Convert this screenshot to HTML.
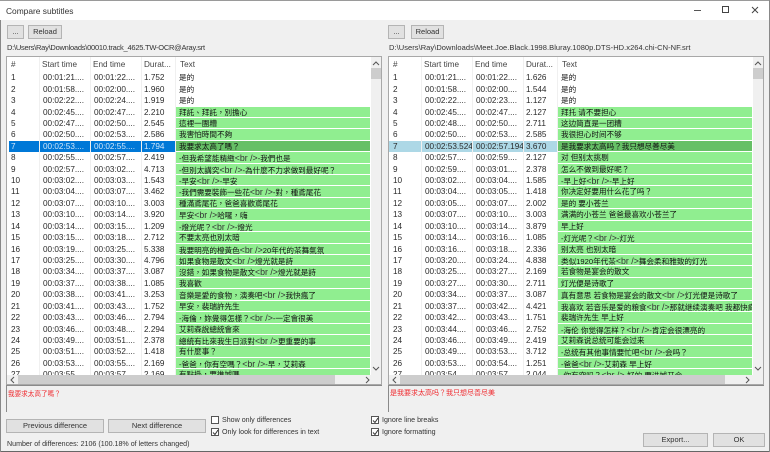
<!DOCTYPE html>
<html><head><meta charset="utf-8"><style>
html,body{margin:0;padding:0}
html{background:#f0f0f0}
body{width:770px;height:452px;overflow:hidden;background:#f0f0f0;position:relative;font:8.2px "Liberation Sans","Noto Sans CJK TC",sans-serif;color:#222;filter:blur(.3px)}
div,span{position:absolute;white-space:nowrap;box-sizing:border-box}
.btn{background:#e1e1e1;border:1px solid #b4b4b4;text-align:center;color:#333;font-size:7.5px}
.t{left:0;top:0;height:329px;background:#fff;border:1px solid #a8a8a8;overflow:hidden}
.h{top:0;left:0;right:0;height:16px;background:#fff}
.h span{top:3px;color:#444;font-size:8.2px}
.sep{top:0;height:318px;width:1px;background:#f0f0f0}
.r{left:0;width:364px;height:11.42px;line-height:12px;color:#2a2a2a}
.r span:nth-child(1){left:4px}
.r span:nth-child(2){left:36px}
.r span:nth-child(3){left:87px}
.r span:nth-child(4){left:137px}
.r span:nth-child(5){left:169px;width:194px;height:10.4px;background:#90ee90;padding-left:3px;font-size:7.6px;color:#111;overflow:hidden}
.r span.w{background:#fff}
.r i{font-style:normal;font-size:8.8px;color:#333}
.s7 span:nth-child(5){background:#66c066!important}
.sb{background:#f0f0f0}
.th{background:#cdcdcd}
.memo{height:27px;background:#f0f0f0;border-left:1px solid #8a8a8a;border-top:1px solid #8a8a8a;color:#f0282d;padding:2px 0 0 1px}
.cb{width:8px;height:8px;background:#fff;border:1px solid #555}
.cb svg{position:absolute;left:0;top:0}
.lb{color:#333;font-size:7.1px}
</style></head><body>
<div style="left:0;top:0;width:770px;height:20px;background:#fff"></div>
<div style="left:0;top:0;width:770px;height:1px;background:#9a9a9a"></div>
<div style="left:6px;top:5.5px;font-size:8.4px;color:#333">Compare subtitles</div>
<div style="left:694px;top:10px;width:7px;height:1px;background:#555"></div>
<div style="left:722px;top:6px;width:7px;height:7px;border:1px solid #444"></div>
<svg style="position:absolute;left:750px;top:5px" width="9" height="9"><path d="M2 2L8 8M8 2L2 8" stroke="#444" stroke-width="1" fill="none"/></svg>

<div class="btn" style="left:7px;top:25px;width:17px;height:14px;line-height:12px">...</div>
<div class="btn" style="left:28px;top:25px;width:34px;height:14px;line-height:12px">Reload</div>
<div style="left:7px;top:43px;color:#333;font-size:7.5px;letter-spacing:-.25px">D:\Users\Ray\Downloads\00010.track_4625.TW-OCR@Aray.srt</div>

<div class="btn" style="left:388px;top:25px;width:17px;height:14px;line-height:12px">...</div>
<div class="btn" style="left:411px;top:25px;width:33px;height:14px;line-height:12px">Reload</div>
<div style="left:389px;top:43px;color:#333;font-size:7.5px;letter-spacing:.05px">D:\Users\Ray\Downloads\Meet.Joe.Black.1998.Bluray.1080p.DTS-HD.x264.chi-CN-NF.srt</div>

<!-- LEFT TABLE -->
<div class="t" style="left:6px;top:56px;width:376px">
<div class="h"><span style="left:4px">#</span><span style="left:35px">Start time</span><span style="left:86px">End time</span><span style="left:137px">Durat...</span><span style="left:173px">Text</span></div>
<div style="left:0;top:15.3px;width:364px;height:303px;overflow:hidden">
<div class="r" style="top:0px"><span>1</span><span>00:01:21....</span><span>00:01:22....</span><span>1.752</span><span class="w">是的</span></div>
<div class="r" style="top:11.42px"><span>2</span><span>00:01:58....</span><span>00:02:00....</span><span>1.960</span><span class="w">是的</span></div>
<div class="r" style="top:22.84px"><span>3</span><span>00:02:22....</span><span>00:02:24....</span><span>1.919</span><span class="w">是的</span></div>
<div class="r" style="top:34.26px"><span>4</span><span>00:02:45....</span><span>00:02:47....</span><span>2.210</span><span>拜託、拜託，別擔心</span></div>
<div class="r" style="top:45.68px"><span>5</span><span>00:02:47....</span><span>00:02:50....</span><span>2.545</span><span>這裡一團糟</span></div>
<div class="r" style="top:57.1px"><span>6</span><span>00:02:50....</span><span>00:02:53....</span><span>2.586</span><span>我害怕時間不夠</span></div>
<div style="left:2px;top:68.5px;width:167px;height:11.4px;background:#0078d7"></div>
<div class="r s7" style="top:68.52px;color:#cfe6fa"><span>7</span><span>00:02:53....</span><span>00:02:55....</span><span>1.794</span><span>我要求太高了嗎？</span></div>
<div class="r" style="top:79.94px"><span>8</span><span>00:02:55....</span><span>00:02:57....</span><span>2.419</span><span>-但我希望能精緻<i>&lt;br /&gt;</i>-我們也是</span></div>
<div class="r" style="top:91.36px"><span>9</span><span>00:02:57....</span><span>00:03:02....</span><span>4.713</span><span>-但別太講究<i>&lt;br /&gt;</i>-為什麼不力求做到最好呢？</span></div>
<div class="r" style="top:102.78px"><span>10</span><span>00:03:02....</span><span>00:03:03....</span><span>1.543</span><span>-早安<i>&lt;br /&gt;</i>-早安</span></div>
<div class="r" style="top:114.2px"><span>11</span><span>00:03:04....</span><span>00:03:07....</span><span>3.462</span><span>-我們需要裝飾一些花<i>&lt;br /&gt;</i>-對，種鳶尾花</span></div>
<div class="r" style="top:125.62px"><span>12</span><span>00:03:07....</span><span>00:03:10....</span><span>3.003</span><span>種滿鳶尾花，爸爸喜歡鳶尾花</span></div>
<div class="r" style="top:137.04px"><span>13</span><span>00:03:10....</span><span>00:03:14....</span><span>3.920</span><span>早安<i>&lt;br /&gt;</i>哈囉，嗨</span></div>
<div class="r" style="top:148.46px"><span>14</span><span>00:03:14....</span><span>00:03:15....</span><span>1.209</span><span>-燈光呢？<i>&lt;br /&gt;</i>-燈光</span></div>
<div class="r" style="top:159.88px"><span>15</span><span>00:03:15....</span><span>00:03:18....</span><span>2.712</span><span>不要太亮也別太暗</span></div>
<div class="r" style="top:171.3px"><span>16</span><span>00:03:19....</span><span>00:03:25....</span><span>5.338</span><span>我要明亮的橙黃色<i>&lt;br /&gt;</i>20年代的茶舞氣氛</span></div>
<div class="r" style="top:182.72px"><span>17</span><span>00:03:25....</span><span>00:03:30....</span><span>4.796</span><span>如果食物是散文<i>&lt;br /&gt;</i>燈光就是詩</span></div>
<div class="r" style="top:194.14px"><span>18</span><span>00:03:34....</span><span>00:03:37....</span><span>3.087</span><span>沒錯，如果食物是散文<i>&lt;br /&gt;</i>燈光就是詩</span></div>
<div class="r" style="top:205.56px"><span>19</span><span>00:03:37....</span><span>00:03:38....</span><span>1.085</span><span>我喜歡</span></div>
<div class="r" style="top:216.98px"><span>20</span><span>00:03:38....</span><span>00:03:41....</span><span>3.253</span><span>音樂是愛的食物，演奏吧<i>&lt;br /&gt;</i>我快瘋了</span></div>
<div class="r" style="top:228.4px"><span>21</span><span>00:03:41....</span><span>00:03:43....</span><span>1.752</span><span>早安，裴瑞許先生</span></div>
<div class="r" style="top:239.82px"><span>22</span><span>00:03:43....</span><span>00:03:46....</span><span>2.794</span><span>-海倫，妳覺得怎樣？<i>&lt;br /&gt;</i>-一定會很美</span></div>
<div class="r" style="top:251.24px"><span>23</span><span>00:03:46....</span><span>00:03:48....</span><span>2.294</span><span>艾莉森說總統會來</span></div>
<div class="r" style="top:262.66px"><span>24</span><span>00:03:49....</span><span>00:03:51....</span><span>2.378</span><span>總統有比來我生日派對<i>&lt;br /&gt;</i>更重要的事</span></div>
<div class="r" style="top:274.08px"><span>25</span><span>00:03:51....</span><span>00:03:52....</span><span>1.418</span><span>有什麼事？</span></div>
<div class="r" style="top:285.5px"><span>26</span><span>00:03:53....</span><span>00:03:55....</span><span>2.169</span><span>-爸爸，你有空嗎？<i>&lt;br /&gt;</i>-早，艾莉森</span></div>
<div class="r" style="top:296.92px"><span>27</span><span>00:03:55....</span><span>00:03:57....</span><span>2.169</span><span>有點掛，要進城嗎</span></div>
</div>
<div class="sep" style="left:32px"></div><div class="sep" style="left:83px"></div><div class="sep" style="left:134px"></div><div class="sep" style="left:168px"></div>
<div class="sb" style="left:364px;top:0;width:11px;height:318px"></div>
<div class="th" style="left:364px;top:11px;width:10px;height:11px"></div>
<svg style="position:absolute;left:365px;top:4px" width="8" height="6"><path d="M1 4L4 1L7 4" stroke="#555" fill="none"/></svg>
<svg style="position:absolute;left:365px;top:309px" width="8" height="6"><path d="M1 1L4 4L7 1" stroke="#555" fill="none"/></svg>
<div class="sb" style="left:0;top:318px;width:375px;height:11px"></div>
<div class="th" style="left:11px;top:318px;width:317px;height:9px"></div>
<svg style="position:absolute;left:3px;top:319px" width="6" height="8"><path d="M4 1L1 4L4 7" stroke="#555" fill="none"/></svg>
<svg style="position:absolute;left:358px;top:319px" width="6" height="8"><path d="M1 1L4 4L1 7" stroke="#555" fill="none"/></svg>
</div>
<div class="memo" style="left:6px;top:385px;width:376px;font-size:6.6px">我要求太高了嗎？</div>

<!-- RIGHT TABLE -->
<div class="t" style="left:388px;top:56px;width:376px">
<div class="h"><span style="left:4px">#</span><span style="left:35px">Start time</span><span style="left:86px">End time</span><span style="left:137px">Durat...</span><span style="left:173px">Text</span></div>
<div style="left:0;top:15.3px;width:364px;height:303px;overflow:hidden">
<div class="r" style="top:0px"><span>1</span><span>00:01:21....</span><span>00:01:22....</span><span>1.626</span><span class="w">是的</span></div>
<div class="r" style="top:11.42px"><span>2</span><span>00:01:58....</span><span>00:02:00....</span><span>1.544</span><span class="w">是的</span></div>
<div class="r" style="top:22.84px"><span>3</span><span>00:02:22....</span><span>00:02:23....</span><span>1.127</span><span class="w">是的</span></div>
<div class="r" style="top:34.26px"><span>4</span><span>00:02:45....</span><span>00:02:47....</span><span>2.127</span><span>拜托 请不要担心</span></div>
<div class="r" style="top:45.68px"><span>5</span><span>00:02:48....</span><span>00:02:50....</span><span>2.711</span><span>这边简直是一团糟</span></div>
<div class="r" style="top:57.1px"><span>6</span><span>00:02:50....</span><span>00:02:53....</span><span>2.585</span><span>我很担心时间不够</span></div>
<div style="left:0;top:68.5px;width:169px;height:11.4px;background:#add8e6"></div>
<div class="r s7" style="top:68.52px"><span>7</span><span>00:02:53.524</span><span>00:02:57.194</span><span>3.670</span><span>是我要求太高吗？我只想尽善尽美</span></div>
<div class="r" style="top:79.94px"><span>8</span><span>00:02:57....</span><span>00:02:59....</span><span>2.127</span><span>对 但别太挑剔</span></div>
<div class="r" style="top:91.36px"><span>9</span><span>00:02:59....</span><span>00:03:01....</span><span>2.378</span><span>怎么不做到最好呢？</span></div>
<div class="r" style="top:102.78px"><span>10</span><span>00:03:02....</span><span>00:03:04....</span><span>1.585</span><span>-早上好<i>&lt;br /&gt;</i>-早上好</span></div>
<div class="r" style="top:114.2px"><span>11</span><span>00:03:04....</span><span>00:03:05....</span><span>1.418</span><span>你决定好要用什么花了吗？</span></div>
<div class="r" style="top:125.62px"><span>12</span><span>00:03:05....</span><span>00:03:07....</span><span>2.002</span><span>是的 要小苍兰</span></div>
<div class="r" style="top:137.04px"><span>13</span><span>00:03:07....</span><span>00:03:10....</span><span>3.003</span><span>满满的小苍兰 爸爸最喜欢小苍兰了</span></div>
<div class="r" style="top:148.46px"><span>14</span><span>00:03:10....</span><span>00:03:14....</span><span>3.879</span><span>早上好</span></div>
<div class="r" style="top:159.88px"><span>15</span><span>00:03:14....</span><span>00:03:16....</span><span>1.085</span><span>-灯光呢？<i>&lt;br /&gt;</i>-灯光</span></div>
<div class="r" style="top:171.3px"><span>16</span><span>00:03:16....</span><span>00:03:18....</span><span>2.336</span><span>别太亮 也别太暗</span></div>
<div class="r" style="top:182.72px"><span>17</span><span>00:03:20....</span><span>00:03:24....</span><span>4.838</span><span>类似1920年代茶<i>&lt;br /&gt;</i>舞会柔和雅致的灯光</span></div>
<div class="r" style="top:194.14px"><span>18</span><span>00:03:25....</span><span>00:03:27....</span><span>2.169</span><span>若食物是宴会的散文</span></div>
<div class="r" style="top:205.56px"><span>19</span><span>00:03:27....</span><span>00:03:30....</span><span>2.711</span><span>灯光便是诗歌了</span></div>
<div class="r" style="top:216.98px"><span>20</span><span>00:03:34....</span><span>00:03:37....</span><span>3.087</span><span>真有意思 若食物是宴会的散文<i>&lt;br /&gt;</i>灯光便是诗歌了</span></div>
<div class="r" style="top:228.4px"><span>21</span><span>00:03:37....</span><span>00:03:42....</span><span>4.421</span><span>我喜欢 若音乐是爱的粮食<i>&lt;br /&gt;</i>那就继续演奏吧 我都快疯了</span></div>
<div class="r" style="top:239.82px"><span>22</span><span>00:03:42....</span><span>00:03:43....</span><span>1.751</span><span>裴瑞许先生 早上好</span></div>
<div class="r" style="top:251.24px"><span>23</span><span>00:03:44....</span><span>00:03:46....</span><span>2.752</span><span>-海伦 你觉得怎样？<i>&lt;br /&gt;</i>-肯定会很漂亮的</span></div>
<div class="r" style="top:262.66px"><span>24</span><span>00:03:46....</span><span>00:03:49....</span><span>2.419</span><span>艾莉森说总统可能会过来</span></div>
<div class="r" style="top:274.08px"><span>25</span><span>00:03:49....</span><span>00:03:53....</span><span>3.712</span><span>-总统有其他事情要忙吧<i>&lt;br /&gt;</i>-会吗？</span></div>
<div class="r" style="top:285.5px"><span>26</span><span>00:03:53....</span><span>00:03:54....</span><span>1.251</span><span>-爸爸<i>&lt;br /&gt;</i>-艾莉森 早上好</span></div>
<div class="r" style="top:296.92px"><span>27</span><span>00:03:54....</span><span>00:03:57....</span><span>2.044</span><span>-你有空吗？<i>&lt;br /&gt;</i>-好的 要进城开会</span></div>
</div>
<div class="sep" style="left:32px"></div><div class="sep" style="left:83px"></div><div class="sep" style="left:134px"></div><div class="sep" style="left:168px"></div>
<div class="sb" style="left:364px;top:0;width:11px;height:318px"></div>
<div class="th" style="left:364px;top:11px;width:10px;height:11px"></div>
<svg style="position:absolute;left:365px;top:4px" width="8" height="6"><path d="M1 4L4 1L7 4" stroke="#555" fill="none"/></svg>
<svg style="position:absolute;left:365px;top:309px" width="8" height="6"><path d="M1 1L4 4L7 1" stroke="#555" fill="none"/></svg>
<div class="sb" style="left:0;top:318px;width:375px;height:11px"></div>
<div class="th" style="left:11px;top:318px;width:325px;height:9px"></div>
<svg style="position:absolute;left:3px;top:319px" width="6" height="8"><path d="M4 1L1 4L4 7" stroke="#555" fill="none"/></svg>
<svg style="position:absolute;left:356px;top:319px" width="6" height="8"><path d="M1 1L4 4L1 7" stroke="#555" fill="none"/></svg>
</div>
<div class="memo" style="left:388px;top:385px;width:376px;font-size:7px">是我要求太高吗？我只想尽善尽美</div>

<!-- BOTTOM -->
<div class="btn" style="left:6px;top:419px;width:98px;height:14px;line-height:12px">Previous difference</div>
<div class="btn" style="left:108px;top:419px;width:98px;height:14px;line-height:12px">Next difference</div>
<div class="cb" style="left:211px;top:416px"></div>
<div class="lb" style="left:222px;top:416px">Show only differences</div>
<div class="cb" style="left:211px;top:428px"><svg width="7" height="7"><path d="M1 3.5L3 5.5L6 1" stroke="#333" fill="none"/></svg></div>
<div class="lb" style="left:222px;top:427.5px">Only look for differences in text</div>
<div class="cb" style="left:371px;top:416px"><svg width="7" height="7"><path d="M1 3.5L3 5.5L6 1" stroke="#333" fill="none"/></svg></div>
<div class="lb" style="left:382px;top:416px">Ignore line breaks</div>
<div class="cb" style="left:371px;top:428px"><svg width="7" height="7"><path d="M1 3.5L3 5.5L6 1" stroke="#333" fill="none"/></svg></div>
<div class="lb" style="left:382px;top:427.5px">Ignore formatting</div>
<div class="lb" style="left:7px;top:439.5px">Number of differences: 2106 (100.18% of letters changed)</div>
<div class="btn" style="left:643px;top:433px;width:65px;height:14px;line-height:12px">Export...</div>
<div class="btn" style="left:713px;top:433px;width:52px;height:14px;line-height:12px">OK</div>
<div style="left:0;top:451px;width:770px;height:1px;background:#666"></div>
<div style="left:0;top:20px;width:1px;height:432px;background:#888"></div>
<div style="left:769px;top:0;width:1px;height:452px;background:#888"></div>
</body></html>
